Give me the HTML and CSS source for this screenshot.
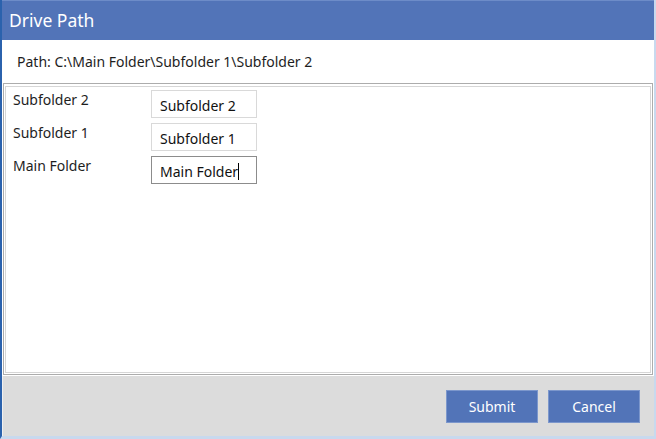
FILE: index.html
```html
<!DOCTYPE html>
<html>
<head>
<meta charset="utf-8">
<link rel="stylesheet" href="styles.css">
</head>
<body>
<div class="window">
  <div class="titlebar">Drive Path</div>
  <div class="pathrow">Path: C:\Main Folder\Subfolder 1\Subfolder 2</div>
  <div class="panel">
    <div class="panel-inner">
      <div class="form">
        <div class="label">Subfolder 2</div>
        <div class="field">Subfolder 2</div>
        <div class="label">Subfolder 1</div>
        <div class="field">Subfolder 1</div>
        <div class="label">Main Folder</div>
        <div class="field focused">Main Folder<span class="caret"></span></div>
      </div>
    </div>
  </div>
  <div class="footer">
    <button class="btn">Submit</button>
    <button class="btn">Cancel</button>
  </div>
</div>
</body>
</html>
```
FILE: styles.css
```css
* { box-sizing: border-box; }
html, body {
  margin: 0;
  padding: 0;
  width: 656px;
  height: 439px;
  overflow: hidden;
  background: #dcdcdc;
  font-family: "Noto Sans", "Open Sans", sans-serif;
}
.window {
  width: 656px;
  height: 439px;
  display: flex;
  flex-direction: column;
  border-left: 2px solid #2b62ad;
  border-right: 2px solid #c8d9ee;
  border-bottom: 3px solid #c8d9ee;
  background: #dcdcdc;
}
.titlebar {
  height: 40px;
  background: #5274b8;
  border-top: 1px solid #6d8cc8;
  color: #fff;
  font-size: 17.5px;
  padding-left: 7px;
  padding-top: 7px;
  line-height: 24px;
}
.pathrow {
  height: 43px;
  background: #fff;
  color: #1e1e1e;
  font-size: 14px;
  padding-left: 15px;
  padding-top: 12px;
  line-height: 20px;
}
.panel {
  height: 293px;
  background: #fff;
  padding: 0 1px 1px 1px;
}
.panel-inner {
  height: 100%;
  border: 1px solid #acacac;
  padding: 2px 1px 1px 1px;
  background: #fff;
}
.form {
  height: 100%;
  border: 1px solid #d6d6d6;
  display: grid;
  grid-template-columns: 138px 106px;
  grid-auto-rows: 28px;
  row-gap: 5px;
  padding: 3px 0 0 7px;
  align-content: start;
}
.label {
  font-size: 14px;
  color: #1e1e1e;
  line-height: 20px;
}
.field {
  border: 1px solid #d9d9d9;
  font-size: 14px;
  color: #111;
  padding: 5px 0 0 8px;
  line-height: 20px;
  white-space: nowrap;
}
.field.focused {
  border-color: #8c8c8c;
}
.caret {
  display: inline-block;
  width: 1px;
  height: 17px;
  background: #000;
  vertical-align: -3px;
}
.footer {
  flex: 1;
  display: flex;
  justify-content: flex-end;
  align-items: flex-start;
  gap: 10px;
  padding: 14px 14px 0 0;
  background: #dcdcdc;
  border-left: 1px solid #f0f0f0;
}
.btn {
  width: 92px;
  height: 33px;
  background: #5274b8;
  border: 1px solid #7c97cc;
  color: #fff;
  font-family: "Noto Sans", "Open Sans", sans-serif;
  font-size: 14px;
  padding: 0;
}
```
